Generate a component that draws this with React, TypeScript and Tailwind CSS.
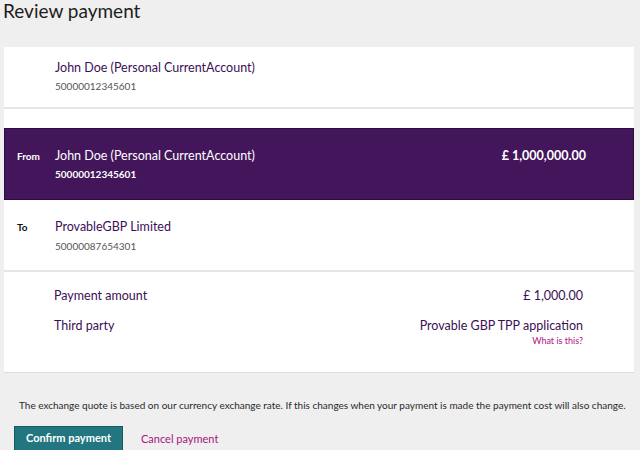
const accountName = 'John Doe (Personal CurrentAccount)'
const accountNumber = '50000012345601'

export default function App() {
  return (
    <div className="min-h-[450px] bg-[#efefef] font-['Lato',sans-serif] text-[#222]">
      <h1 className="pl-[3px] pt-[1px] text-[19px] leading-[19px] text-[#1e1e1e]">Review payment</h1>

      <div className="mt-[27px] ml-[4px] mr-[6px] bg-white shadow-[0_1px_0_#dcdcdc]">
        {/* selected account */}
        <div className="h-[62px] pl-[51px] pt-[13px] border-b-2 border-[#e6e6e6]">
          <p className="text-[12.5px] leading-[16px] text-[#3b0f55]">{accountName}</p>
          <p className="mt-[3px] text-[10px] leading-[14px] text-[#555]">{accountNumber}</p>
        </div>

        <div className="h-[19px]" />

        {/* from */}
        <div className="h-[72px] flex bg-[#43165b] border border-[#2d0a3f] text-white pt-[19px]">
          <span className="w-[50px] pl-[12px] text-[10px] leading-[16px] font-bold">From</span>
          <div className="flex-1">
            <p className="text-[12.5px] leading-[16px]">{accountName}</p>
            <p className="mt-[3px] text-[10px] leading-[14px] font-bold">{accountNumber}</p>
          </div>
          <span className="pr-[47px] text-[12.5px] leading-[16px] font-bold">£ 1,000,000.00</span>
        </div>

        {/* to */}
        <div className="h-[72px] flex pt-[19px] border-b-2 border-[#e6e6e6]">
          <span className="w-[51px] pl-[13px] text-[10px] leading-[16px] font-bold text-[#111]">To</span>
          <div>
            <p className="text-[12.5px] leading-[16px] text-[#3b0f55]">ProvableGBP Limited</p>
            <p className="mt-[4px] text-[10px] leading-[14px] text-[#555]">50000087654301</p>
          </div>
        </div>

        {/* summary */}
        <div className="h-[100px] pl-[50px] pr-[51px] pt-[16px] text-[12.5px] leading-[16px] text-[#3b0f55]">
          <div className="flex justify-between">
            <span>Payment amount</span>
            <span>£ 1,000.00</span>
          </div>
          <div className="mt-[14px] flex justify-between">
            <span>Third party</span>
            <div className="flex flex-col items-end">
              <span>Provable GBP TPP application</span>
              <a className="mt-[1px] text-[9px] leading-[12px] text-[#b0127f]">What is this?</a>
            </div>
          </div>
        </div>
      </div>

      <p className="mt-[26px] pl-[19px] text-[10px] leading-[14px] text-[#2a2a2a]">
        The exchange quote is based on our currency exchange rate. If this changes when your payment is made the payment cost will also change.
      </p>

      <div className="mt-[14px] pl-[14px] flex items-start gap-[18px]">
        <button className="w-[109px] h-[30px] bg-[#21767f] border border-[#175960] text-white text-[11px] font-bold pb-[5px]">
          Confirm payment
        </button>
        <a className="pt-[6px] text-[11px] leading-[14px] text-[#a8137d]">Cancel payment</a>
      </div>
    </div>
  )
}
